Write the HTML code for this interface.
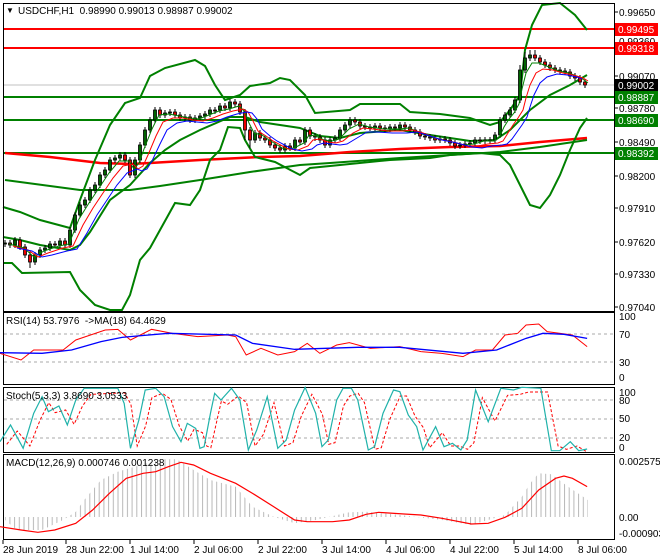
<!DOCTYPE html><html><head><meta charset="utf-8"><style>
html,body{margin:0;padding:0;background:#fff;width:660px;height:560px;overflow:hidden}
svg{display:block;font-family:"Liberation Sans",sans-serif;font-size:10px}
.g{fill:#006400;stroke:#000;stroke-width:.8}.r{fill:#e00;stroke:#000;stroke-width:.8}
.ns{vector-effect:non-scaling-stroke;fill:none}
</style></head><body>
<svg width="660" height="560" xmlns="http://www.w3.org/2000/svg">
<defs><pattern id="hp" patternUnits="userSpaceOnUse" width="4.7" height="10"><rect x="0" y="0" width="1" height="10" fill="#b8b8b8"/></pattern></defs>
<rect width="660" height="560" fill="#fff"/>
<!-- levels -->
<line x1="3" y1="85" x2="614" y2="85" stroke="#c0c0c0"/>
<line x1="3" y1="29" x2="614" y2="29" stroke="#f00" stroke-width="2"/>
<line x1="3" y1="48" x2="614" y2="48" stroke="#f00" stroke-width="2"/>
<line x1="3" y1="97" x2="614" y2="97" stroke="#008000" stroke-width="2"/>
<line x1="3" y1="120" x2="614" y2="120" stroke="#008000" stroke-width="2"/>
<line x1="3" y1="153" x2="614" y2="153" stroke="#008000" stroke-width="2"/>
<polyline fill="none" stroke="#f00" stroke-width="2.5" points="5,153 50,157 100,163 130,164 150,163 200,160 260,157 300,156 350,152 400,149 450,147 500,146 540,142 587,138"/>
<polyline fill="none" stroke="#008000" stroke-width="2" points="5,180 50,186 80,190 130,190 160,186 200,180 250,172 300,165 330,163 400,158 450,155 500,152 540,147 587,140"/>
<polyline fill="none" stroke="#008000" stroke-width="2" points="3,207 20,212 40,220 70,228 80,200 95,160 110,125 125,103 140,98 150,76 165,68 195,60 205,66 215,85 225,100 240,95 250,86 270,83 280,78 290,80 305,95 315,113 350,110 360,104 400,104 410,112 440,114 470,118 490,125 500,122 510,110 520,95 525,50 532,25 542,5 560,3 575,15 587,30"/>
<polyline fill="none" stroke="#008000" stroke-width="2" points="3,263 12,263 22,273 70,272 80,290 95,305 110,310 122,310 130,295 140,260 150,248 175,203 190,205 200,190 210,160 220,150 228,127 240,128 245,140 255,157 275,162 300,175 310,168 340,165 390,160 430,158 450,155 480,153 500,155 510,165 520,185 530,205 540,208 550,195 560,175 570,150 580,128 587,118"/>
<polyline fill="none" stroke="#008000" stroke-width="2" points="3,237 20,240 40,245 70,250 80,245 90,232 110,200 130,185 150,163 165,150 180,140 200,130 230,117 245,117 260,122 280,125 300,128 320,136 340,138 360,133 400,130 430,135 470,141 495,140 510,130 530,110 550,95 570,85 587,75"/>
<!-- wicks -->
<path stroke="#000" stroke-width="1" fill="none" d="M5 240V247M10 240V248M15 237V248M20 237V250M25 244V258M30 252V268M35 252V265M40 247V258M45 245V253M50 241V251M55 241V248M60 238V248M65 238V248M70 227V248M75 212V233M80 202V218M85 197V208M90 187V203M95 182V193M100 172V188M105 167V178M110 157V173M115 155V163M120 152V161M125 152V163M130 157V178M135 157V178M140 142V163M145 127V148M150 117V133M155 107V123M160 107V118M165 110V118M170 109V116M175 109V118M180 112V121M185 114V121M190 114V123M195 115V123M200 113V121M205 111V119M210 107V117M215 107V114M220 103V113M225 103V111M230 99V111M235 99V107M240 101V115M245 109V140M250 127V148M255 130V143M260 130V141M265 135V143M270 137V148M275 142V151M280 145V153M285 143V153M290 143V151M295 137V151M300 137V145M305 127V145M310 127V139M315 133V141M320 134V143M325 137V148M330 137V148M335 135V143M340 127V141M345 122V133M350 117V128M355 117V125M360 119V129M365 123V130M370 124V131M375 123V131M380 123V131M385 125V132M390 124V132M395 124V131M400 122V131M405 122V130M410 124V133M415 127V135M420 129V139M425 133V140M430 134V141M435 135V143M440 136V143M445 136V143M450 137V146M455 140V149M460 142V149M465 141V148M470 140V147M475 137V146M480 137V144M485 137V144M490 137V144M495 132V143M500 117V138M505 112V123M510 107V118M515 97V113M520 65V103M525 52V73M530 50V61M535 50V61M540 55V65M545 59V68M550 62V71M555 65V73M560 67V74M565 68V75M570 69V79M575 73V81M580 75V85M585 79V88"/>
<!-- bodies -->
<g>
<rect x="3.5" y="243" width="3" height="1" class="g"/><rect x="8.5" y="243" width="3" height="2" class="r"/><rect x="13.5" y="240" width="3" height="5" class="g"/><rect x="18.5" y="240" width="3" height="7" class="r"/><rect x="23.5" y="247" width="3" height="8" class="r"/><rect x="28.5" y="255" width="3" height="7" class="r"/><rect x="33.5" y="255" width="3" height="7" class="g"/><rect x="38.5" y="250" width="3" height="5" class="g"/><rect x="43.5" y="248" width="3" height="2" class="g"/><rect x="48.5" y="244" width="3" height="4" class="g"/><rect x="53.5" y="244" width="3" height="1" class="r"/><rect x="58.5" y="241" width="3" height="4" class="g"/><rect x="63.5" y="241" width="3" height="4" class="r"/><rect x="68.5" y="230" width="3" height="15" class="g"/><rect x="73.5" y="215" width="3" height="15" class="g"/><rect x="78.5" y="205" width="3" height="10" class="g"/><rect x="83.5" y="200" width="3" height="5" class="g"/><rect x="88.5" y="190" width="3" height="10" class="g"/><rect x="93.5" y="185" width="3" height="5" class="g"/><rect x="98.5" y="175" width="3" height="10" class="g"/><rect x="103.5" y="170" width="3" height="5" class="g"/><rect x="108.5" y="160" width="3" height="10" class="g"/><rect x="113.5" y="158" width="3" height="2" class="g"/><rect x="118.5" y="155" width="3" height="3" class="g"/><rect x="123.5" y="155" width="3" height="5" class="r"/><rect x="128.5" y="160" width="3" height="15" class="r"/><rect x="133.5" y="160" width="3" height="15" class="g"/><rect x="138.5" y="145" width="3" height="15" class="g"/><rect x="143.5" y="130" width="3" height="15" class="g"/><rect x="148.5" y="120" width="3" height="10" class="g"/><rect x="153.5" y="110" width="3" height="10" class="g"/><rect x="158.5" y="110" width="3" height="5" class="r"/><rect x="163.5" y="113" width="3" height="2" class="g"/><rect x="168.5" y="112" width="3" height="1" class="g"/><rect x="173.5" y="112" width="3" height="3" class="r"/><rect x="178.5" y="115" width="3" height="3" class="r"/><rect x="183.5" y="117" width="3" height="1" class="g"/><rect x="188.5" y="117" width="3" height="3" class="r"/><rect x="193.5" y="118" width="3" height="2" class="g"/><rect x="198.5" y="116" width="3" height="2" class="g"/><rect x="203.5" y="114" width="3" height="2" class="g"/><rect x="208.5" y="110" width="3" height="4" class="g"/><rect x="213.5" y="110" width="3" height="1" class="r"/><rect x="218.5" y="106" width="3" height="4" class="g"/><rect x="223.5" y="106" width="3" height="2" class="r"/><rect x="228.5" y="102" width="3" height="6" class="g"/><rect x="233.5" y="102" width="3" height="2" class="r"/><rect x="238.5" y="104" width="3" height="8" class="r"/><rect x="243.5" y="112" width="3" height="18" class="r"/><rect x="248.5" y="130" width="3" height="10" class="r"/><rect x="253.5" y="133" width="3" height="7" class="g"/><rect x="258.5" y="133" width="3" height="5" class="r"/><rect x="263.5" y="138" width="3" height="2" class="r"/><rect x="268.5" y="140" width="3" height="5" class="r"/><rect x="273.5" y="145" width="3" height="3" class="r"/><rect x="278.5" y="148" width="3" height="2" class="r"/><rect x="283.5" y="146" width="3" height="4" class="g"/><rect x="288.5" y="146" width="3" height="2" class="r"/><rect x="293.5" y="140" width="3" height="8" class="g"/><rect x="298.5" y="140" width="3" height="2" class="r"/><rect x="303.5" y="130" width="3" height="12" class="g"/><rect x="308.5" y="130" width="3" height="6" class="r"/><rect x="313.5" y="136" width="3" height="1" class="r"/><rect x="318.5" y="137" width="3" height="3" class="r"/><rect x="323.5" y="140" width="3" height="5" class="r"/><rect x="328.5" y="140" width="3" height="5" class="g"/><rect x="333.5" y="138" width="3" height="2" class="g"/><rect x="338.5" y="130" width="3" height="8" class="g"/><rect x="343.5" y="125" width="3" height="5" class="g"/><rect x="348.5" y="120" width="3" height="5" class="g"/><rect x="353.5" y="120" width="3" height="2" class="r"/><rect x="358.5" y="122" width="3" height="4" class="r"/><rect x="363.5" y="126" width="3" height="1" class="r"/><rect x="368.5" y="127" width="3" height="1" class="r"/><rect x="373.5" y="126" width="3" height="2" class="g"/><rect x="378.5" y="126" width="3" height="2" class="r"/><rect x="383.5" y="128" width="3" height="1" class="r"/><rect x="388.5" y="127" width="3" height="2" class="g"/><rect x="393.5" y="127" width="3" height="1" class="r"/><rect x="398.5" y="125" width="3" height="3" class="g"/><rect x="403.5" y="125" width="3" height="2" class="r"/><rect x="408.5" y="127" width="3" height="3" class="r"/><rect x="413.5" y="130" width="3" height="2" class="r"/><rect x="418.5" y="132" width="3" height="4" class="r"/><rect x="423.5" y="136" width="3" height="1" class="r"/><rect x="428.5" y="137" width="3" height="1" class="r"/><rect x="433.5" y="138" width="3" height="2" class="r"/><rect x="438.5" y="139" width="3" height="1" class="g"/><rect x="443.5" y="139" width="3" height="1" class="r"/><rect x="448.5" y="140" width="3" height="3" class="r"/><rect x="453.5" y="143" width="3" height="3" class="r"/><rect x="458.5" y="145" width="3" height="1" class="g"/><rect x="463.5" y="144" width="3" height="1" class="g"/><rect x="468.5" y="143" width="3" height="1" class="g"/><rect x="473.5" y="140" width="3" height="3" class="g"/><rect x="478.5" y="140" width="3" height="1" class="r"/><rect x="483.5" y="140" width="3" height="1" class="r"/><rect x="488.5" y="140" width="3" height="1" class="g"/><rect x="493.5" y="135" width="3" height="5" class="g"/><rect x="498.5" y="120" width="3" height="15" class="g"/><rect x="503.5" y="115" width="3" height="5" class="g"/><rect x="508.5" y="110" width="3" height="5" class="g"/><rect x="513.5" y="100" width="3" height="10" class="g"/><rect x="518.5" y="70" width="3" height="30" class="g"/><rect x="523.5" y="58" width="3" height="12" class="g"/><rect x="528.5" y="55" width="3" height="3" class="g"/><rect x="533.5" y="55" width="3" height="3" class="r"/><rect x="538.5" y="58" width="3" height="4" class="r"/><rect x="543.5" y="62" width="3" height="3" class="r"/><rect x="548.5" y="65" width="3" height="3" class="r"/><rect x="553.5" y="68" width="3" height="2" class="r"/><rect x="558.5" y="70" width="3" height="1" class="r"/><rect x="563.5" y="71" width="3" height="1" class="r"/><rect x="568.5" y="72" width="3" height="4" class="r"/><rect x="573.5" y="76" width="3" height="2" class="r"/><rect x="578.5" y="78" width="3" height="4" class="r"/><rect x="583.5" y="82" width="3" height="3" class="r"/>
</g>
<!-- short MAs -->
<polyline fill="none" stroke="#008000" stroke-width="1" transform="translate(4,1)" points="5,243 20,247 30,256 40,250 55,245 65,243 75,218 85,202 95,187 105,172 115,160 125,160 130,168 135,162 140,148 148,128 155,114 165,113 175,115 185,117 195,118 205,114 215,110 225,108 235,105 240,110 245,122 250,132 258,134 265,139 280,148 290,147 300,142 305,134 312,135 320,139 328,140 335,138 345,128 355,123 365,126 380,128 395,128 405,127 415,131 430,137 445,140 460,144 470,143 480,140 490,140 495,137 500,126 505,118 510,112 515,103 518,88 522,72 528,62 535,62 545,66 555,70 565,72 575,76 580,79 584,82"/>
<polyline fill="none" stroke="#f00" stroke-width="1" transform="translate(8,3)" points="5,243 20,247 30,254 40,250 55,245 65,243 75,222 85,205 95,190 105,175 115,163 125,161 130,166 135,163 140,152 148,133 155,119 165,115 175,115 185,117 195,118 205,115 215,111 225,108 235,106 240,109 245,118 250,128 258,133 265,138 280,146 290,147 300,143 305,137 312,136 320,139 328,140 335,138 345,130 355,125 365,126 380,128 395,128 405,127 415,130 430,136 445,139 460,143 470,143 480,141 490,140 495,138 500,130 505,122 510,115 515,107 518,95 522,82 528,70 535,66 545,67 555,70 565,72 575,75 580,78"/>
<polyline fill="none" stroke="#00f" stroke-width="1" transform="translate(12,5)" points="5,243 20,246 30,252 40,250 55,246 65,244 75,228 85,210 95,195 105,180 115,168 125,164 130,166 135,164 140,156 148,139 155,125 165,118 175,116 185,117 195,118 205,116 215,112 225,109 235,107 240,108 245,114 250,124 258,131 265,136 280,144 290,146 300,144 305,140 312,138 320,139 328,140 335,139 345,133 355,127 365,127 380,128 395,128 405,127 415,130 430,135 445,138 460,142 470,143 480,141 490,140 495,139 500,134 505,127 510,120 515,112 518,102 522,90 528,78 535,72 545,69 555,70 565,72 570,74"/>
<rect x="3.5" y="3.5" width="611" height="308" fill="none" stroke="#000"/>
<text x="6" y="13" font-size="8">▼</text>
<text x="18" y="14" xml:space="preserve">USDCHF,H1  0.98990 0.99013 0.98987 0.99002</text>
<!-- price axis -->
<g stroke="#000"><line x1="614" y1="12" x2="618" y2="12"/><line x1="614" y1="76" x2="618" y2="76"/><line x1="614" y1="108" x2="618" y2="108"/><line x1="614" y1="142" x2="618" y2="142"/><line x1="614" y1="176" x2="618" y2="176"/><line x1="614" y1="208" x2="618" y2="208"/><line x1="614" y1="242" x2="618" y2="242"/><line x1="614" y1="274" x2="618" y2="274"/><line x1="614" y1="307" x2="618" y2="307"/></g>
<text x="619" y="16">0.99650</text><text x="619" y="45">0.99360</text><text x="619" y="80">0.99070</text><text x="619" y="112">0.98780</text><text x="619" y="146">0.98490</text><text x="619" y="180">0.98200</text><text x="619" y="212">0.97910</text><text x="619" y="246">0.97620</text><text x="619" y="278">0.97330</text><text x="619" y="311">0.97040</text>
<rect x="615" y="23" width="43" height="13" fill="#f00"/><text x="618" y="33" fill="#fff">0.99495</text>
<rect x="615" y="42" width="43" height="13" fill="#f00"/><text x="618" y="52" fill="#fff">0.99318</text>
<rect x="615" y="79" width="43" height="13" fill="#000"/><text x="618" y="89" fill="#fff">0.99002</text>
<rect x="615" y="91" width="43" height="13" fill="#008000"/><text x="618" y="101" fill="#fff">0.98887</text>
<rect x="615" y="114" width="43" height="13" fill="#008000"/><text x="618" y="124" fill="#fff">0.98690</text>
<rect x="615" y="147" width="43" height="13" fill="#008000"/><text x="618" y="157" fill="#fff">0.98392</text>
<!-- RSI -->
<rect x="3.5" y="312.5" width="611" height="72" fill="none" stroke="#000"/>
<line x1="4" y1="334" x2="614" y2="334" stroke="#aaa" stroke-dasharray="3,3"/>
<line x1="4" y1="362" x2="614" y2="362" stroke="#aaa" stroke-dasharray="3,3"/>
<g transform="translate(0,300) scale(0.42088,0.33333)">
<polyline class="ns" stroke="#f00" stroke-width="1" points="0,160 50,180 80,150 150,150 180,120 250,90 280,88 310,120 360,88 410,100 470,110 540,105 560,110 585,165 620,145 660,165 700,155 730,130 760,160 800,135 830,128 880,145 950,140 1000,155 1050,160 1100,170 1130,150 1170,150 1200,105 1230,100 1250,75 1280,72 1300,95 1360,105 1395,140"/>
<polyline class="ns" stroke="#00f" stroke-width="1.3" points="0,158 100,160 170,150 240,125 290,112 400,100 560,105 600,130 700,148 850,142 950,142 1100,160 1180,150 1250,115 1290,100 1340,103 1395,115"/>
</g>
<text x="6" y="324" xml:space="preserve">RSI(14) 53.7976  -&gt;MA(18) 64.4629</text>
<text x="619" y="320">100</text><text x="619" y="338">70</text><text x="619" y="366">30</text><text x="619" y="381">0</text>
<!-- Stoch -->
<rect x="3.5" y="387.5" width="611" height="65" fill="none" stroke="#000"/>
<line x1="4" y1="400" x2="614" y2="400" stroke="#aaa" stroke-dasharray="3,3"/>
<line x1="4" y1="419" x2="614" y2="419" stroke="#aaa" stroke-dasharray="3,3"/>
<line x1="4" y1="438" x2="614" y2="438" stroke="#aaa" stroke-dasharray="3,3"/>
<g transform="translate(0,300) scale(0.42088,0.33333)">
<polyline class="ns" stroke="#f00" stroke-width="1" stroke-dasharray="3,2" transform="translate(16,8)" points="0,425 25,385 55,430 80,350 100,300 115,330 140,322 160,365 180,310 200,275 280,270 295,305 310,430 330,370 345,285 370,272 390,290 410,370 430,415 445,380 465,390 475,430 485,435 500,350 510,295 525,305 550,280 570,300 590,430 610,395 635,300 660,430 680,420 700,340 725,275 750,335 765,425 780,420 800,310 815,280 835,272 850,300 875,440 890,435 910,350 935,280 950,280 970,340 990,375 1005,435 1035,390 1055,430 1075,430 1095,440 1110,420 1130,285 1160,355 1190,278 1220,275 1240,268 1285,268 1310,430 1330,440 1355,430 1375,445 1380,447"/>
<polyline class="ns" stroke="#20b2aa" stroke-width="1.2" points="0,425 25,375 55,445 80,340 100,290 115,335 140,318 160,375 180,300 200,265 280,265 295,310 310,445 330,360 345,270 370,265 390,290 410,380 430,425 445,370 465,385 475,445 485,440 500,340 510,280 525,300 550,265 570,300 590,450 610,390 635,290 660,445 680,420 700,330 725,262 750,340 765,440 780,420 800,300 815,265 835,265 850,300 875,450 890,440 910,340 935,270 950,275 970,345 990,380 1005,450 1035,380 1055,440 1075,430 1095,450 1110,420 1130,270 1160,365 1190,265 1220,270 1240,262 1285,265 1310,452 1330,452 1355,425 1375,452 1395,447"/>
</g>
<text x="6" y="399">Stoch(5,3,3) 3.8690 3.0533</text>
<text x="619" y="396">100</text><text x="619" y="404">80</text><text x="619" y="422">50</text><text x="619" y="441">20</text><text x="619" y="451">0</text>
<!-- MACD -->
<rect x="3.5" y="454.5" width="611" height="85" fill="none" stroke="#000"/>
<polygon fill="url(#hp)" points="5,520 16.8,530 42,530 63,520 75.8,511.7 84.2,500 101,480 117.8,471.7 134.7,466.7 160,459.3 176.8,459.3 193.6,470 210.4,480 235.7,486.7 252.5,506.7 273.6,516.7 294.6,523.3 315.7,520 349.3,512.3 366.2,511.7 399.8,515 441.9,520 471.4,525 505,515 521.9,496.7 530.3,483.3 538.7,473.3 551.3,474.3 568.2,486.7 588,500 588,517 5,517"/>
<g transform="translate(0,300) scale(0.42088,0.33333)">
<polyline class="ns" stroke="#f00" stroke-width="1.2" points="0,680 50,690 90,697 130,690 180,670 220,630 260,580 300,535 340,520 370,515 400,500 430,487 460,495 500,520 560,550 600,580 650,620 700,660 730,665 790,665 830,660 870,643 900,637 960,642 1000,645 1050,655 1120,672 1160,670 1200,652 1240,625 1280,570 1320,535 1340,528 1360,535 1395,560"/>
</g>
<text x="6" y="466">MACD(12,26,9) 0.000746 0.001238</text>
<text x="619" y="465">0.002575</text><text x="619" y="521">0.00</text><text x="619" y="537">-0.000903</text>
<!-- time axis -->
<g stroke="#000"><line x1="3" y1="540" x2="3" y2="544"/><line x1="66" y1="540" x2="66" y2="544"/><line x1="130" y1="540" x2="130" y2="544"/><line x1="194" y1="540" x2="194" y2="544"/><line x1="258" y1="540" x2="258" y2="544"/><line x1="322" y1="540" x2="322" y2="544"/><line x1="386" y1="540" x2="386" y2="544"/><line x1="450" y1="540" x2="450" y2="544"/><line x1="514" y1="540" x2="514" y2="544"/><line x1="578" y1="540" x2="578" y2="544"/></g>
<text x="3" y="553">28 Jun 2019</text><text x="66" y="553">28 Jun 22:00</text><text x="130" y="553">1 Jul 14:00</text><text x="194" y="553">2 Jul 06:00</text><text x="258" y="553">2 Jul 22:00</text><text x="322" y="553">3 Jul 14:00</text><text x="386" y="553">4 Jul 06:00</text><text x="450" y="553">4 Jul 22:00</text><text x="514" y="553">5 Jul 14:00</text><text x="578" y="553">8 Jul 06:00</text>
</svg>
</body></html>
